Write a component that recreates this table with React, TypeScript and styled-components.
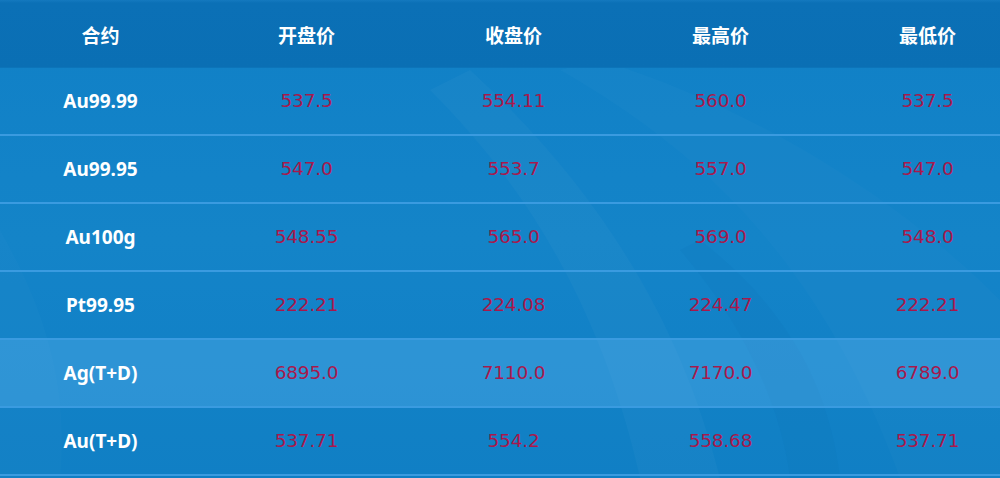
import React from 'react';
import styled, { createGlobalStyle } from 'styled-components';

const GlobalStyle = createGlobalStyle`
  html, body {
    margin: 0;
    padding: 0;
    background: #0f7cc3;
    overflow: hidden;
  }
`;

type Quote = {
  name: string;
  open: string;
  close: string;
  high: string;
  low: string;
};

const QUOTES: Quote[] = [
  { name: 'Au99.99', open: '537.5', close: '554.11', high: '560.0', low: '537.5' },
  { name: 'Au99.95', open: '547.0', close: '553.7', high: '557.0', low: '547.0' },
  { name: 'Au100g', open: '548.55', close: '565.0', high: '569.0', low: '548.0' },
  { name: 'Pt99.95', open: '222.21', close: '224.08', high: '224.47', low: '222.21' },
  { name: 'Ag(T+D)', open: '6895.0', close: '7110.0', high: '7170.0', low: '6789.0' },
  { name: 'Au(T+D)', open: '537.71', close: '554.2', high: '558.68', low: '537.71' },
];

const HEADERS = ['合约', '开盘价', '收盘价', '最高价', '最低价'];

const Backdrop = () => (
  <Swoosh viewBox="0 0 1000 478" preserveAspectRatio="none">
    <path d="M430 90 C 520 180, 600 300, 640 478 L 720 478 C 680 320, 600 190, 470 70 Z" fill="#ffffff" opacity="0.035" />
    <path d="M560 70 C 700 150, 820 260, 900 478 L 1000 478 L 1000 300 C 900 200, 760 110, 600 60 Z" fill="#ffffff" opacity="0.025" />
    <path d="M680 250 C 740 320, 780 400, 790 478 L 840 478 C 830 390, 790 310, 700 240 Z" fill="#0a5fa3" opacity="0.1" />
    <path d="M0 230 C 40 300, 70 380, 60 478 L 0 478 Z" fill="#ffffff" opacity="0.02" />
  </Swoosh>
);

const App = () => {
  return (
    <>
      <GlobalStyle />
      <Page>
        <Backdrop />
        <Table>
          <HeadRow>
            {HEADERS.map((h) => (
              <HeadCell key={h}>{h}</HeadCell>
            ))}
          </HeadRow>
          {QUOTES.map((q, i) => (
            <Row key={q.name} $active={i === 4}>
              <NameCell>{q.name}</NameCell>
              <PriceCell>{q.open}</PriceCell>
              <PriceCell>{q.close}</PriceCell>
              <PriceCell>{q.high}</PriceCell>
              <PriceCell>{q.low}</PriceCell>
            </Row>
          ))}
        </Table>
      </Page>
    </>
  );
};

export default App;

const Page = styled.div`
  position: relative;
  width: 1000px;
  height: 478px;
  overflow: hidden;
  background: linear-gradient(180deg, #1080c6 0%, #1484c9 50%, #0f7ec4 100%);
`;

const Swoosh = styled.svg`
  position: absolute;
  inset: 0;
  width: 100%;
  height: 100%;
  pointer-events: none;
`;

const Table = styled.div`
  position: relative;
  display: flex;
  flex-direction: column;
  margin-left: -2px;
  width: 1035px;
`;

const HeadRow = styled.div`
  display: grid;
  grid-template-columns: 205px repeat(4, 207px);
  height: 68px;
  align-items: center;
  background: linear-gradient(180deg, #1479bf 0px, #0b70b6 3px, #0a6fb4 100%);
  box-shadow: inset 0 -1px 0 #0c74b9;
`;

const HeadCell = styled.div`
  text-align: center;
  color: #ffffff;
  font-family: 'Noto Sans', 'Noto Sans CJK SC', sans-serif;
  font-weight: 700;
  font-size: 19px;
  line-height: 1;
  padding-top: 4px;
`;

const Row = styled.div<{ $active?: boolean }>`
  display: grid;
  grid-template-columns: 205px repeat(4, 207px);
  height: 66px;
  align-items: center;
  border-bottom: 2px solid #3a9be0;
  background: ${(p) => (p.$active ? 'rgba(80, 170, 230, 0.45)' : 'rgba(20, 130, 200, 0.25)')};
`;

const NameCell = styled.div`
  text-align: center;
  color: #ffffff;
  font-family: 'Noto Sans', 'Noto Sans CJK SC', sans-serif;
  font-weight: 700;
  font-size: 19px;
  line-height: 1;
`;

const PriceCell = styled.div`
  text-align: center;
  color: #a8184c;
  font-family: 'DejaVu Sans', sans-serif;
  font-size: 18.5px;
  letter-spacing: -0.2px;
  line-height: 1;
`;
